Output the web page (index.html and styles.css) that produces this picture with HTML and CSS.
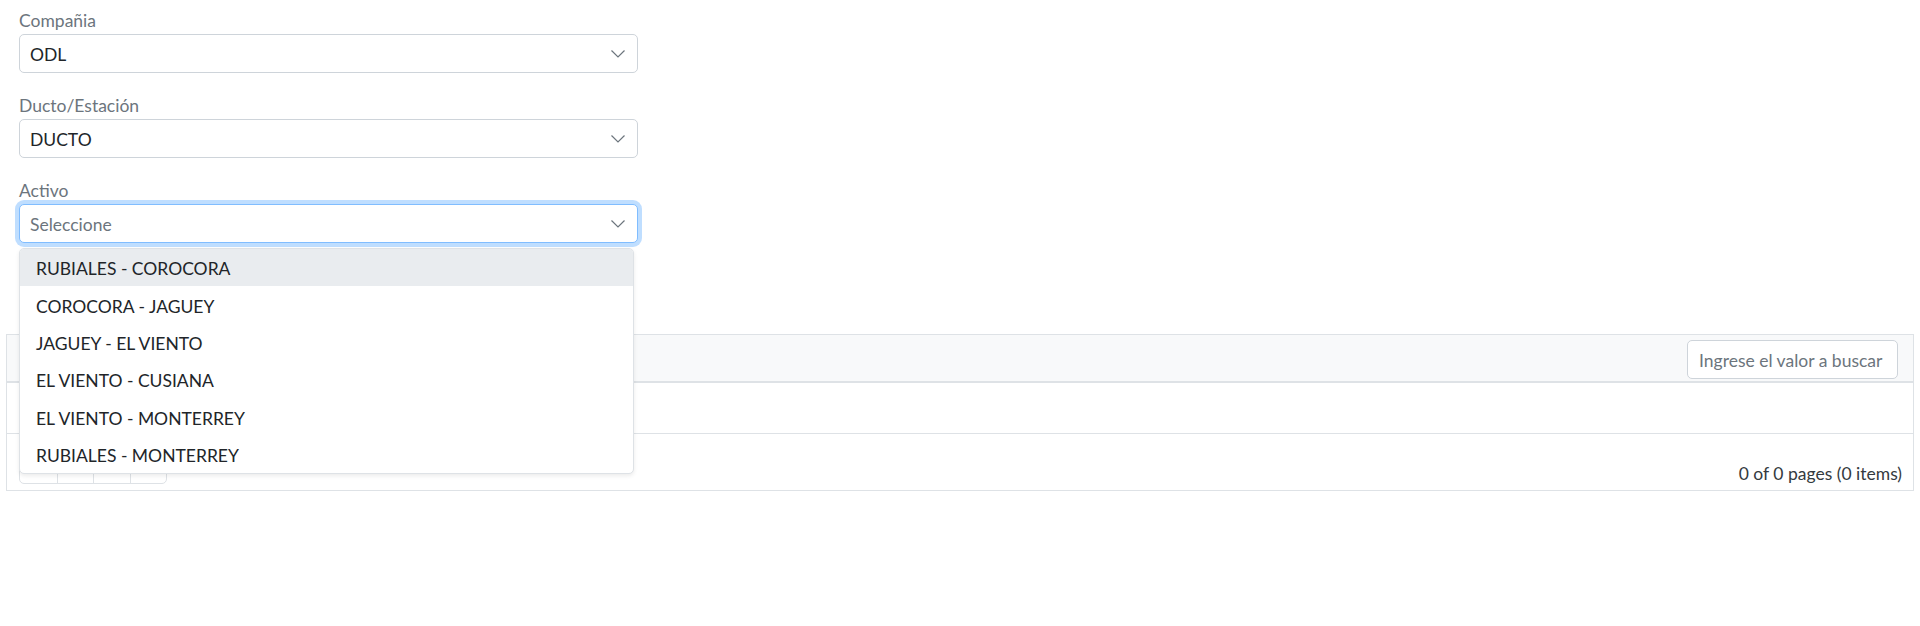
FILE: index.html
```html
<!DOCTYPE html>
<html lang="es">
<head>
<meta charset="utf-8">
<title>Activos</title>
<link rel="stylesheet" href="styles.css">
</head>
<body>
<div class="page">
  <div class="form">
    <div class="field">
      <label class="label">Compañia</label>
      <div class="select-wrap">
        <div class="select"><span class="value">ODL</span>
          <svg class="chev" width="14" height="8" viewBox="0 0 14 8"><polyline points="0.5,0.5 7,7 13.5,0.5" fill="none" stroke="#6c757d" stroke-width="1.2"/></svg>
        </div>
      </div>
    </div>
    <div class="field">
      <label class="label">Ducto/Estación</label>
      <div class="select-wrap">
        <div class="select"><span class="value">DUCTO</span>
          <svg class="chev" width="14" height="8" viewBox="0 0 14 8"><polyline points="0.5,0.5 7,7 13.5,0.5" fill="none" stroke="#6c757d" stroke-width="1.2"/></svg>
        </div>
      </div>
    </div>
    <div class="field">
      <label class="label">Activo</label>
      <div class="select-wrap">
        <div class="select focused"><span class="value placeholder">Seleccione</span>
          <svg class="chev" width="14" height="8" viewBox="0 0 14 8"><polyline points="0.5,0.5 7,7 13.5,0.5" fill="none" stroke="#6c757d" stroke-width="1.2"/></svg>
        </div>
        <ul class="dropdown">
          <li class="option active">RUBIALES - COROCORA</li>
          <li class="option">COROCORA - JAGUEY</li>
          <li class="option">JAGUEY - EL VIENTO</li>
          <li class="option">EL VIENTO - CUSIANA</li>
          <li class="option">EL VIENTO - MONTERREY</li>
          <li class="option">RUBIALES - MONTERREY</li>
        </ul>
      </div>
    </div>
  </div>

  <div class="grid">
    <div class="grid-header">
      <div class="search">Ingrese el valor a buscar</div>
    </div>
    <div class="grid-row"></div>
    <div class="grid-footer">
      <div class="pager">
        <span class="pg-btn"><svg width="10" height="10" viewBox="0 0 10 10"><polyline points="5,1 1,5 5,9" fill="none" stroke="#007bff" stroke-width="1.3"/><polyline points="9,1 5,5 9,9" fill="none" stroke="#007bff" stroke-width="1.3"/></svg></span>
        <span class="pg-btn"><svg width="10" height="10" viewBox="0 0 10 10"><polyline points="7,1 3,5 7,9" fill="none" stroke="#007bff" stroke-width="1.3"/></svg></span>
        <span class="pg-btn"><svg width="10" height="10" viewBox="0 0 10 10"><polyline points="3,1 7,5 3,9" fill="none" stroke="#007bff" stroke-width="1.3"/></svg></span>
        <span class="pg-btn"><svg width="10" height="10" viewBox="0 0 10 10"><polyline points="1,1 5,5 1,9" fill="none" stroke="#007bff" stroke-width="1.3"/><polyline points="5,1 9,5 5,9" fill="none" stroke="#007bff" stroke-width="1.3"/></svg></span>
      </div>
      <div class="info">0 of 0 pages (0 items)</div>
    </div>
  </div>
</div>
</body>
</html>
```

FILE: styles.css
```css
* { box-sizing: border-box; }

html, body {
  margin: 0;
  padding: 0;
  background: #ffffff;
}

body {
  font-family: Lato, "Open Sans", "Liberation Sans", sans-serif;
  font-size: 17.5px;
  color: #212529;
}

.page {
  padding: 7px 6px 0 6px;
}

.form {
  padding-left: 13px;
  width: 632px;
}

.field {
  display: flex;
  flex-direction: column;
  margin-bottom: 19px;
}

.field:last-child {
  margin-bottom: 0;
}

.label {
  height: 27px;
  line-height: 27px;
  color: #6c757d;
}

.select-wrap {
  position: relative;
}

.select {
  height: 39px;
  width: 619px;
  border: 1px solid #ced4da;
  border-radius: 5px;
  display: flex;
  align-items: center;
  justify-content: space-between;
  padding: 2px 12px 0 10px;
  background: #fff;
}

.select.focused {
  border-color: #80bdff;
  box-shadow: 0 0 0 4px rgba(0, 123, 255, 0.25);
}

.value {
  line-height: 26px;
  color: #212529;
}

.value.placeholder {
  color: #6c757d;
}

.chev {
  display: block;
  margin-bottom: 2px;
}

.dropdown {
  position: absolute;
  top: calc(100% + 5px);
  left: 0;
  width: 615px;
  margin: 0;
  padding: 0;
  list-style: none;
  background: #fff;
  border: 1px solid #dee2e6;
  border-radius: 5px;
  box-shadow: 0 2px 4px rgba(0, 0, 0, 0.08);
  z-index: 10;
  overflow: hidden;
}

.option {
  height: 37.4px;
  display: flex;
  align-items: center;
  padding: 2px 16px 0 16px;
  color: #212529;
}

.option.active {
  background: #e9ecef;
}

.grid {
  margin-top: 91px;
  border: 1px solid #dee2e6;
  width: 1908px;
}

.grid-header {
  height: 48px;
  background: #f8f9fa;
  border-bottom: 2px solid #dee2e6;
  display: flex;
  justify-content: flex-end;
  align-items: flex-start;
  padding: 5px 15px 0 0;
}

.search {
  width: 211px;
  height: 39px;
  border: 1px solid #ced4da;
  border-radius: 5px;
  background: #fff;
  color: #6c757d;
  display: flex;
  align-items: center;
  padding: 2px 10px 0 11px;
  white-space: nowrap;
}

.grid-row {
  height: 51px;
  border-bottom: 1px solid #dee2e6;
}

.grid-footer {
  height: 56px;
  display: flex;
  justify-content: space-between;
  align-items: flex-start;
  padding: 11px 11px 0 12px;
}

.pager {
  display: flex;
  border: 1px solid #dee2e6;
  border-radius: 5px;
  height: 39px;
}

.pg-btn {
  width: 36.5px;
  display: flex;
  align-items: center;
  justify-content: center;
  border-left: 1px solid #dee2e6;
}

.pg-btn:first-child {
  border-left: none;
}

.info {
  line-height: 26px;
  padding-top: 16px;
  color: #343a40;
}
```
